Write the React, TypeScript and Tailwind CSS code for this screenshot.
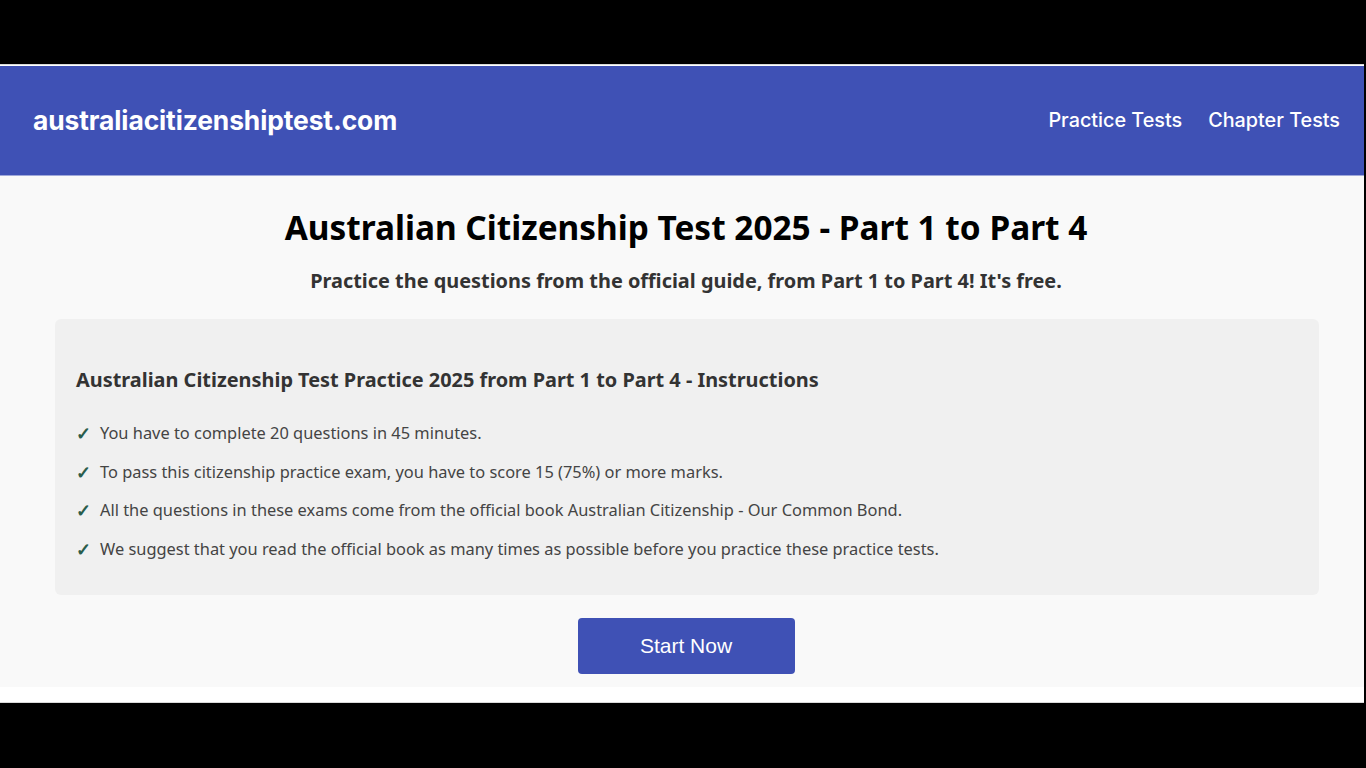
import React from "react";

const items = [
  "You have to complete 20 questions in 45 minutes.",
  "To pass this citizenship practice exam, you have to score 15 (75%) or more marks.",
  "All the questions in these exams come from the official book Australian Citizenship - Our Common Bond.",
  "We suggest that you read the official book as many times as possible before you practice these practice tests.",
];

const App = () => {
  return (
    <div className="w-[1366px] h-[768px] bg-black pt-[64px] overflow-hidden">
      <div className="w-[1364px] border-t border-[#d9d9d9] bg-white">
        <header className="h-[110px] mt-px bg-[#3f51b5] flex flex-row items-center justify-between pl-[33px] pr-[24px] border-b border-[#9fa8da]">
          <div className="font-['Inter',sans-serif] font-bold text-[26.4px] text-white tracking-[-0.1px]">
            australiacitizenshiptest.com
          </div>
          <nav className="flex flex-row gap-[26px] font-['Inter',sans-serif] font-medium text-[19.8px] text-white">
            <span>Practice Tests</span>
            <span>Chapter Tests</span>
          </nav>
        </header>

        <main className="bg-[#f9f9f9] flex flex-col items-center pl-[8px] pt-[29px] pb-[13px] font-['Noto_Sans',sans-serif]">
          <h1 className="font-bold text-[33.4px] leading-[44px] text-black">
            Australian Citizenship Test 2025 - Part 1 to Part 4
          </h1>
          <p className="mt-[18px] font-bold text-[19.9px] leading-[28px] text-[#333]">
            Practice the questions from the official guide, from Part 1 to Part 4! It's free.
          </p>

          <section className="mt-[24px] w-[1264px] self-start ml-[47px] bg-[#f0f0f0] rounded-[6px] pl-[21px] pr-5 pt-[48px] pb-[34px]">
            <h2 className="font-bold text-[19.9px] leading-[26px] text-[#333]">
              Australian Citizenship Test Practice 2025 from Part 1 to Part 4 - Instructions
            </h2>
            <ul className="mt-[28px] flex flex-col gap-[14.5px]">
              {items.map((t) => (
                <li key={t} className="flex flex-row items-center text-[16.4px] leading-[24px] text-[#444]">
                  <span className="w-[24px] text-[#2a5d4c] font-bold text-[18px]">✓</span>
                  <span>{t}</span>
                </li>
              ))}
            </ul>
          </section>

          <button className="mt-[23px] w-[217px] h-[56px] bg-[#3f51b5] rounded-[4px] text-white font-['Liberation_Sans',sans-serif] text-[21px]">
            Start Now
          </button>
        </main>
        <div className="h-[16px] bg-white border-b border-[#d9d9d9]" />
      </div>
    </div>
  );
};

export default App;
